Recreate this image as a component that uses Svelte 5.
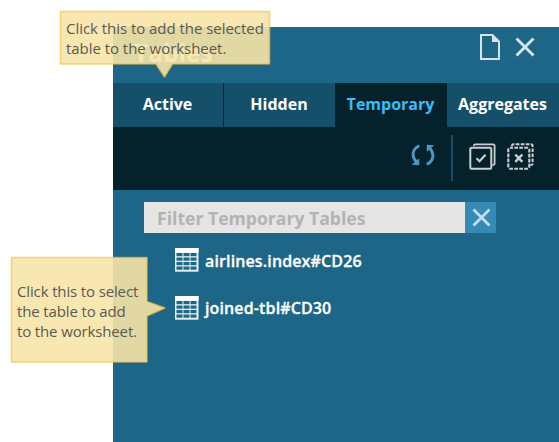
<script>
  const tabs = ['Active', 'Hidden', 'Temporary', 'Aggregates'];
  const tables = ['airlines.index#CD26', 'joined-tbl#CD30'];
  let selected = $state('Temporary');
  let filter = $state('');
</script>

<div class="page">
  <section class="panel">
    <header>
      <h1>Tables</h1>
      <svg class="doc" width="20" height="26" viewBox="0 0 20 26">
        <path d="M1 1H12.5L19 7.5V25H1Z" fill="none" stroke="#d3e4ec" stroke-width="2" />
        <path d="M12 0.5L19.5 8H12Z" fill="#d3e4ec" />
      </svg>
      <svg class="close" width="20" height="20" viewBox="0 0 20 20">
        <path d="M1.5 1.5L18.5 18.5M18.5 1.5L1.5 18.5" stroke="#d3e4ec" stroke-width="2.9" />
      </svg>
    </header>
    <nav>
      {#each tabs as tab}
        <button class="tab" class:active={tab === selected} onclick={() => (selected = tab)}>{tab}</button>
      {/each}
    </nav>
    <div class="toolbar">
      <svg class="refresh" width="24" height="22" viewBox="0 0 24 22">
        <g fill="none" stroke="#4b97c5" stroke-width="2.9">
          <path d="M8.300 1.700C1 5 0.300 12.500 5.500 18" />
          <path d="M15.700 20.300C23 17 23.700 9.500 18.500 4" />
        </g>
        <path d="M0.800 20.800L8.200 21.300V14.200ZM23.200 1.200L15.800 0.700V7.800Z" fill="#4b97c5" />
      </svg>
      <span class="rule"></span>
      <svg class="select" width="27" height="27" viewBox="0 0 27 27">
        <g fill="none" stroke="#c9cfd1" stroke-width="2">
          <rect x="1.300" y="4.700" width="21" height="21" rx="1.500" />
          <path d="M5 3.300V2.500Q5 1.300 6.300 1.300H24Q25.600 1.300 25.600 3V20.500Q25.600 22 23.500 22" stroke-width="1.8" />
          <path d="M7.500 15.200L10.500 18.200L16.500 11.700" stroke-width="2.2" />
        </g>
      </svg>
      <svg class="clear" width="27" height="27" viewBox="0 0 27 27">
        <g fill="none" stroke="#c9cfd1" stroke-width="2.1">
          <rect x="1.300" y="4.700" width="21" height="21" rx="2" stroke-dasharray="3.700 1.300" stroke-dashoffset="1" />
          <path d="M5 3.300V2.500Q5 1.300 6.300 1.300H24Q25.600 1.300 25.600 3V20.500Q25.600 22 23.500 22" stroke-width="2" stroke-dasharray="3.700 1.300" />
          <path d="M8.300 11.500L15.300 18.800M15.300 11.500L8.300 18.800" stroke-width="2.5" />
        </g>
      </svg>
    </div>
    <div class="filter">
      <input type="text" placeholder="Filter Temporary Tables" bind:value={filter} />
      <button class="reset" aria-label="Clear filter" onclick={() => (filter = '')}>
        <svg width="19" height="19" viewBox="0 0 19 19">
          <path d="M1.500 1.500L17.500 17.500M17.500 1.500L1.500 17.500" stroke="#c3deea" stroke-width="2.8" />
        </svg>
      </button>
    </div>
    <ul>
      {#each tables as name}
        <li>
          <svg width="24" height="24" viewBox="0 0 24 24">
            <rect width="23.500" height="23.700" fill="#e4eff4" />
            <rect width="23.500" height="4.500" fill="#fff" />
            {#each [5, 9.500, 14, 18.500] as y}
              {#each [1.500, 8.500, 15.500] as x}
                <rect {x} {y} width="6" height="3.200" fill="#1e6687" />
              {/each}
            {/each}
          </svg>
          <span class="name">{name}</span>
        </li>
      {/each}
    </ul>
  </section>

  <aside class="tip top">
    <svg width="212" height="69" viewBox="0 0 212 69">
      <path d="M1.500 1.500H210.500V54H113.500L105.500 67L97 54H1.500Z" />
    </svg>
    <p>Click this to add the selected<br />table to the worksheet.</p>
  </aside>
  <aside class="tip left">
    <svg width="158" height="108" viewBox="0 0 158 108">
      <path d="M1.500 1.500H137V45.500L155 52L137 60V106H1.500Z" />
    </svg>
    <p>Click this to select<br />the table to add<br />to the worksheet.</p>
  </aside>
</div>

<style>
  .page {
    position: relative;
    width: 559px;
    height: 442px;
    overflow: hidden;
    background: #fff;
    box-sizing: border-box;
    padding: 27px 0 0 113px;
    font-family: "Open Sans", sans-serif;
  }
  svg { display: block; flex: none; }
  button { border: 0; padding: 0; margin: 0; font: inherit; color: inherit; }
  .panel { height: 415px; background: #1e6687; color: #fff; }
  header { display: flex; height: 56px; }
  h1 { margin: 8px auto 0 21px; font-size: 24.5px; line-height: 36px; font-weight: 700; }
  .doc { margin: 7px 0 0; }
  .close { margin: 10px 24px 0 15px; }
  nav { display: flex; height: 44px; background: #05222c; }
  .tab {
    width: 112px;
    background: #164f69;
    font-size: 16px;
    font-weight: 700;
    line-height: 42px;
    padding: 0 1px 2px 0;
    white-space: nowrap;
  }
  .tab:first-child { width: 110px; margin-right: 1px; }
  .tab:nth-child(2) { width: 111px; }
  .tab.active { background: #05222c; color: #35bef8; }
  .toolbar { display: flex; height: 63px; background: #05222c; }
  .refresh { margin: 17px 0 0 298px; }
  .rule { width: 2px; height: 46px; margin: 8px 16px 0; background: #164f69; }
  .select { margin-top: 16px; }
  .clear { margin: 16px 0 0 11px; }
  .filter { display: flex; height: 31px; margin: 12px 0 0 31px; width: 352px; }
  input {
    flex: 1;
    min-width: 0;
    box-sizing: border-box;
    border: 0;
    border-radius: 0;
    margin: 0;
    padding: 1px 13px 0;
    background: #e5e5e5;
    color: #333;
    font: 700 17.6px "Open Sans", sans-serif;
  }
  input::placeholder { color: #b3b3b3; opacity: 1; }
  .reset { display: flex; align-items: center; justify-content: center; width: 31px; padding-left: 1px; background: #368bb4; }
  ul { margin: 15px 0 0 62px; padding: 0; list-style: none; }
  li { display: flex; height: 48px; }
  .name {
    margin-left: 6px;
    font-size: 16px;
    font-weight: 600;
    line-height: 26px;
    letter-spacing: 0.13px;
    -webkit-text-stroke: 0.3px #fff;
  }
  li:last-child .name { line-height: 24px; }
  .tip { position: absolute; color: #5b5a52; }
  .tip svg { position: absolute; left: 0; top: 0; }
  .tip path { fill: rgba(247, 228, 167, 0.9); stroke: rgba(242, 194, 64, 0.65); stroke-width: 1.600; stroke-linejoin: round; }
  .tip p { position: relative; margin: 0; font-size: 15px; line-height: 20px; white-space: nowrap; letter-spacing: -0.04px; }
  .top { left: 59px; top: 10px; }
  .top p { padding: 8px 0 0 7px; }
  .left { left: 10px; top: 256px; }
  .left p { padding: 25px 0 0 7px; letter-spacing: -0.14px; }
</style>
